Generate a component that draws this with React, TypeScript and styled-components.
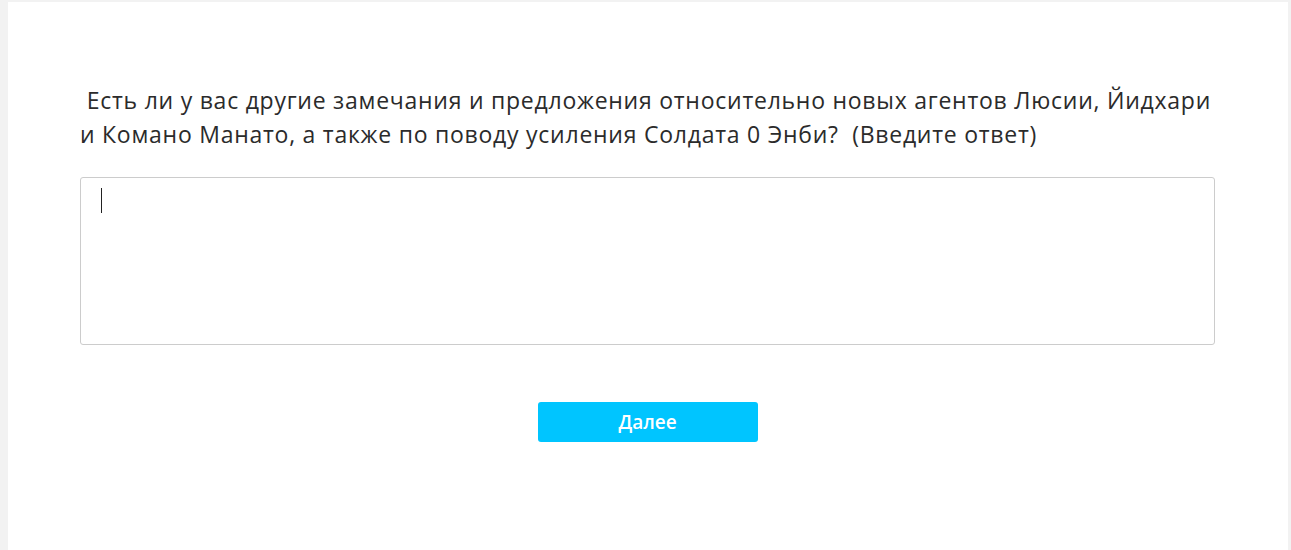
import React from "react";
import styled, { createGlobalStyle } from "styled-components";

const Global = createGlobalStyle`
  html, body { margin: 0; padding: 0; background: #f2f2f2; }
  body { font-family: "Open Sans", "Noto Sans", sans-serif; }
`;

const Page = styled.div`
  padding: 2px 3px 0 8px;
  height: 548px;
`;

const Card = styled.main`
  background: #ffffff;
  height: 100%;
  padding: 81px 73px 0 72px;
  box-sizing: border-box;
  display: flex;
  flex-direction: column;
`;

const Question = styled.div`
  font-size: 23px;
  line-height: 34px;
  letter-spacing: 0.75px;
  color: #2b2b2b;
  margin: 0 0 26px 0;
  white-space: pre-wrap;
`;

const FieldWrap = styled.div`
  position: relative;
`;

const Area = styled.textarea`
  display: block;
  width: 100%;
  height: 168px;
  box-sizing: border-box;
  border: 1px solid #cccccc;
  border-radius: 3px;
  padding: 10px 20px;
  font-family: inherit;
  font-size: 16px;
  resize: none;
  outline: none;
  caret-color: transparent;
`;

const Caret = styled.span`
  position: absolute;
  left: 21px;
  top: 11px;
  width: 1px;
  height: 25px;
  background: #222222;
`;

const Actions = styled.div`
  display: flex;
  justify-content: center;
  margin-top: 57px;
`;

const NextButton = styled.button`
  width: 220px;
  height: 40px;
  border: none;
  border-radius: 3px;
  background: #00c5ff;
  color: #ffffff;
  font-family: inherit;
  font-size: 19px;
  font-weight: 600;
  cursor: pointer;
`;

export default function App() {
  return (
    <>
      <Global />
      <Page>
        <Card>
          <Question>
            {" Есть ли у вас другие замечания и предложения относительно новых агентов Люсии, Йидхари и Комано Манато, а также по поводу усиления Солдата 0 Энби?  (Введите ответ)"}
          </Question>
          <FieldWrap>
            <Area aria-label="Ответ" />
            <Caret />
          </FieldWrap>
          <Actions>
            <NextButton type="button">Далее</NextButton>
          </Actions>
        </Card>
      </Page>
    </>
  );
}
